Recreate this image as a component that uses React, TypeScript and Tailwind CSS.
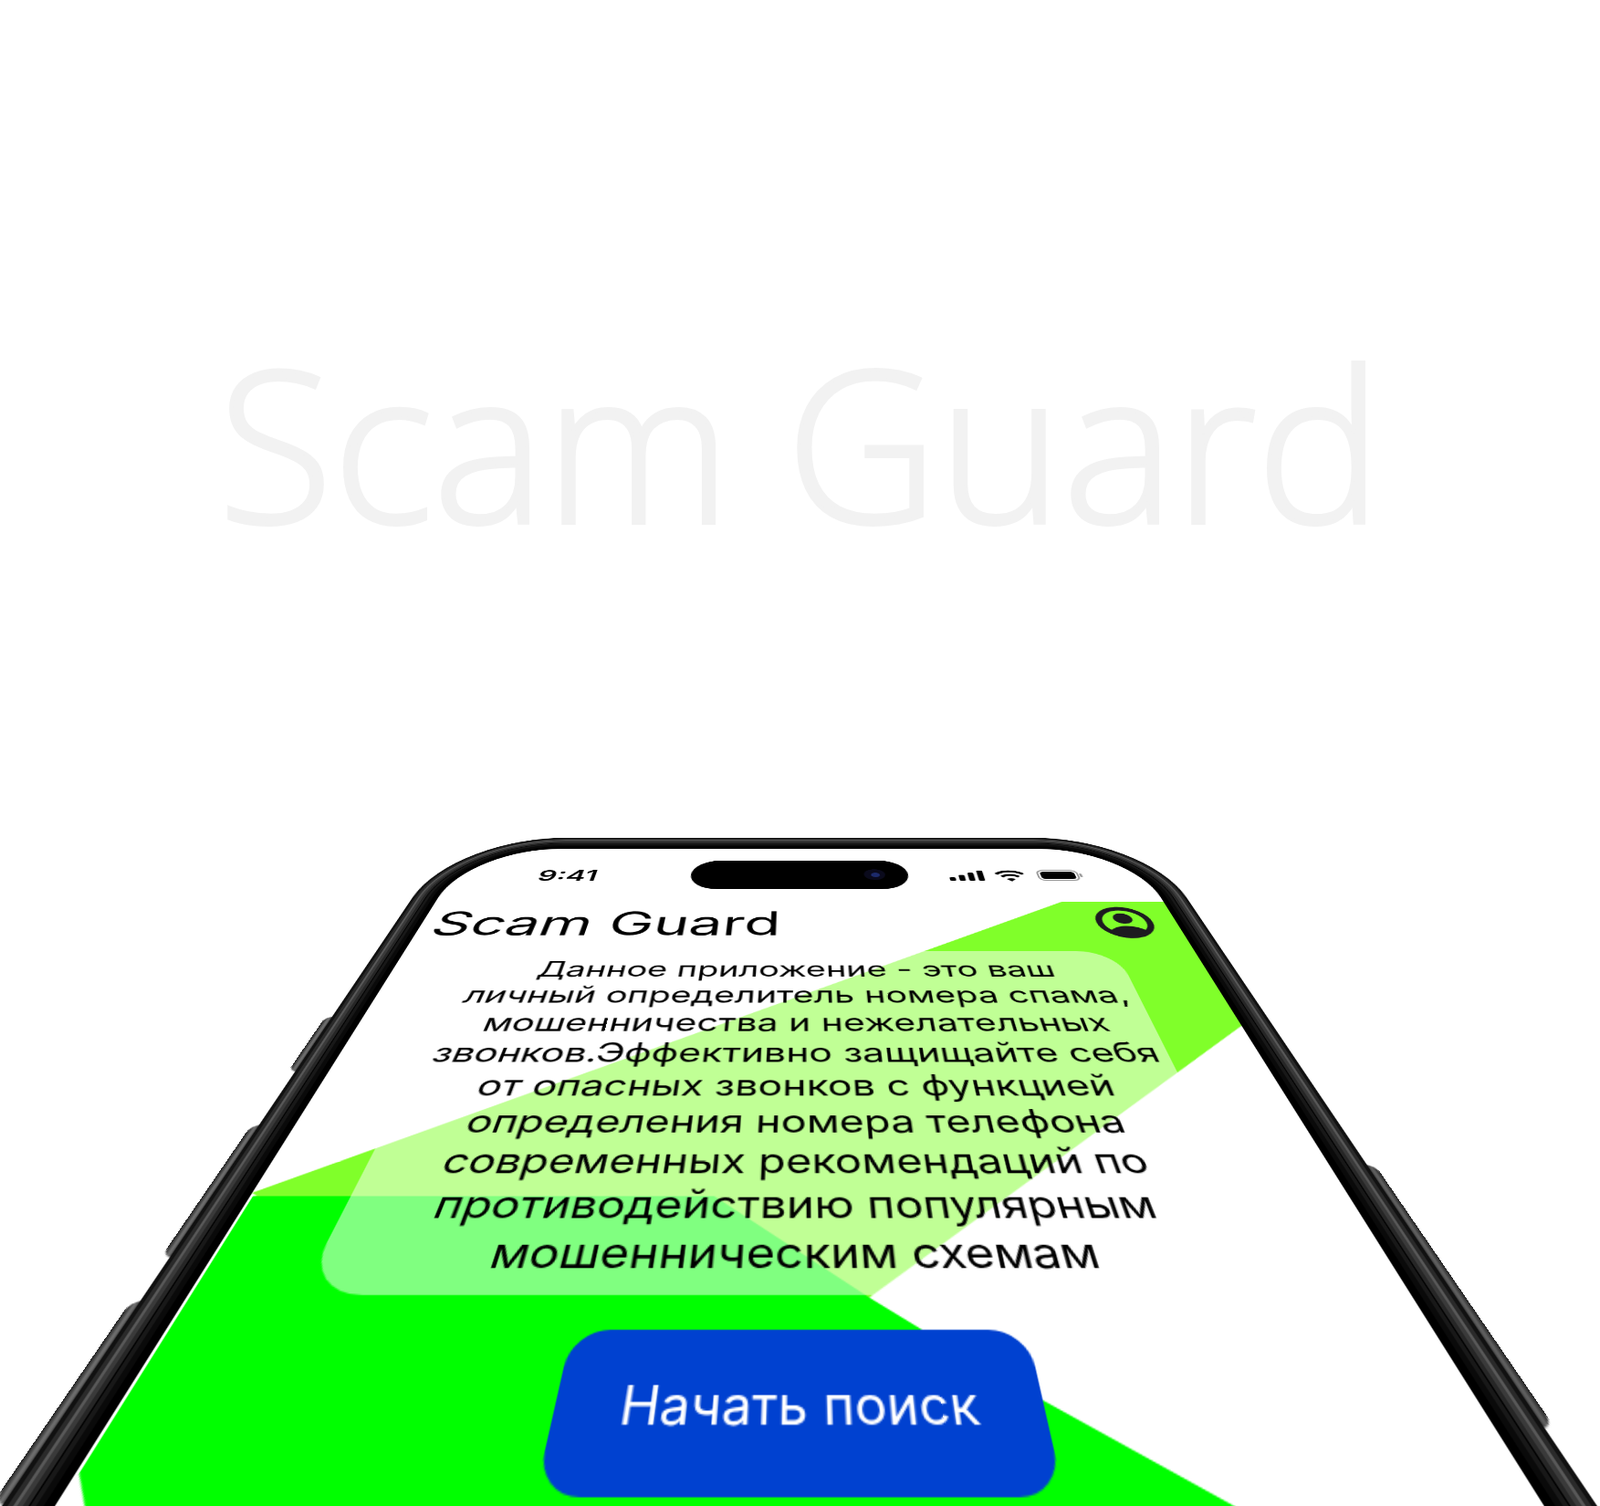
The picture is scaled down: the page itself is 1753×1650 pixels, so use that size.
const lines = [
  'Данное приложение - это ваш',
  'личный определитель номера спама,',
  'мошенничества и нежелательных',
  'звонков.Эффективно защищайте себя',
  'от опасных звонков с функцией',
  'определения номера телефона',
  'современных рекомендаций по',
  'противодействию популярным',
  'мошенническим схемам',
]

const StatusIcons = () => (
  <div className="flex items-center justify-end gap-[6px] pr-[36px] pt-[2px]">
    <svg width="20" height="12" viewBox="0 0 20 12" fill="#000">
      <rect x="0" y="8" width="3.4" height="4" rx="1" />
      <rect x="5.4" y="5.500" width="3.4" height="6.500" rx="1" />
      <rect x="10.8" y="3" width="3.4" height="9" rx="1" />
      <rect x="16.2" y="0.500" width="3.4" height="11.500" rx="1" />
    </svg>
    <svg className="mr-[1px]" width="17" height="13" viewBox="0 0 16 12" fill="none" stroke="#000" strokeWidth="2">
      <path d="M0.800 4.200a10.200 10.200 0 0 1 14.400 0" />
      <path d="M3.500 7a6.400 6.400 0 0 1 9 0" />
      <path d="M8 11.800 5.700 9.400a3.200 3.200 0 0 1 4.600 0Z" fill="#000" stroke="none" />
    </svg>
    <svg width="26" height="12" viewBox="0 0 26 12" fill="none">
      <rect x="0.500" y="0.500" width="22.500" height="11" rx="3.400" stroke="#9a9a9a" />
      <rect x="2" y="2" width="19.500" height="8" rx="2.200" fill="#000" />
      <rect x="24" y="4" width="1.400" height="4" rx="0.700" fill="#9a9a9a" />
    </svg>
  </div>
)

const ProfileIcon = () => (
  <svg width="30" height="30" viewBox="0 0 30 30" fill="none">
    <circle cx="15" cy="15" r="13" stroke="#1d1b20" strokeWidth="3.400" />
    <circle cx="15" cy="11.500" r="5" fill="#1d1b20" />
    <path d="M5.500 23c2.400-3 5.800-4.400 9.500-4.400s7.100 1.400 9.500 4.400a13 13 0 0 1-19 0Z" fill="#1d1b20" />
  </svg>
)

const App = () => {
  return (
    <div className="h-[1650px] w-full overflow-hidden bg-white font-[Inter,sans-serif] flex flex-col items-center">
      <div className="h-[930px] w-full pt-[364px] text-center text-[#f2f2f2] font-['Open_Sans',sans-serif] font-light text-[231px] leading-[240px] [-webkit-text-stroke:4px_#f2f2f2]">
        Scam Guard
      </div>

      <div className="relative w-[393px] h-[480px] shrink-0 origin-top-left [transform:matrix3d(1.84345,0,0,0,-0.30429,0.89269,0,-0.0015525,0,0,1,0,-166.24,0,0,1)]">
        {/* side buttons */}
        <div className="absolute left-[-17px] top-[156px] w-[4px] h-[36px] rounded-l-sm bg-linear-to-r from-[#222] via-[#777] to-[#222]" />
        <div className="absolute left-[-17px] top-[222px] w-[4px] h-[60px] rounded-l-sm bg-linear-to-r from-[#222] via-[#777] to-[#222]" />
        <div className="absolute left-[-17px] top-[298px] w-[4px] h-[60px] rounded-l-sm bg-linear-to-r from-[#222] via-[#777] to-[#222]" />
        <div className="absolute right-[-17px] top-[242px] w-[4px] h-[96px] rounded-r-sm bg-linear-to-l from-[#222] via-[#666] to-[#222]" />

        <div className="relative h-full overflow-hidden rounded-[55px] bg-white shadow-[0_0_0_3px_#000,0_0_0_5px_#0a0a0a,0_0_0_6.500px_#181818,0_0_0_7px_#000,0_0_0_8.500px_#262626,0_0_0_10px_#3a3a3a,0_0_0_11px_#585858,0_0_0_12.500px_#2a2a2a,0_0_0_14px_#111]">
          <svg className="absolute inset-0" width="393" height="480" viewBox="0 0 393 480">
            <polygon points="338,59 400,59 400,157 150,350 0,255" fill="#80ff2a" />
            <polygon points="1,256.500 166,256.500 219,297 234,307.600 267,330 311,358 400,420 60,420 1,350" fill="#00ff00" />
          </svg>

          <div className="relative flex flex-col items-center">
            <div className="grid grid-cols-[135px_123px_135px] w-full pt-[14px] h-[46px] items-center">
              <span className="pr-1 pt-[2px] text-center text-[16.600px] font-semibold text-black">9:41</span>
              <div className="flex h-[32px] items-center justify-end rounded-full bg-black pr-[13px]">
                <div className="flex h-[12px] w-[12px] items-center justify-center rounded-full bg-[#0a0a1c]">
                  <div className="h-[5px] w-[5px] rounded-full bg-[#1c2a6b]" />
                </div>
              </div>
              <StatusIcons />
            </div>

            <div className="flex w-full h-[36px] mt-[15px] mb-[1px] items-center justify-between pl-[6.500px] pr-[12px]">
              <h1 className="text-[31px] leading-none text-black">Scam Guard</h1>
              <ProfileIcon />
            </div>

            <div className="mt-[7px] mr-[3px] w-[318px] h-[191px] rounded-[20px] bg-white/50 pt-[5px] text-center text-[16.650px] leading-[20px] text-black whitespace-nowrap">
              {lines.map((line) => (
                <p key={line}>{line}</p>
              ))}
            </div>

            <button className="mt-[12px] h-[48.400px] w-[141px] rounded-[12px] bg-[#0041d0] pb-[1px] text-[15.500px] text-white">
              Начать поиск
            </button>
          </div>
        </div>
      </div>
    </div>
  )
}

export default App
